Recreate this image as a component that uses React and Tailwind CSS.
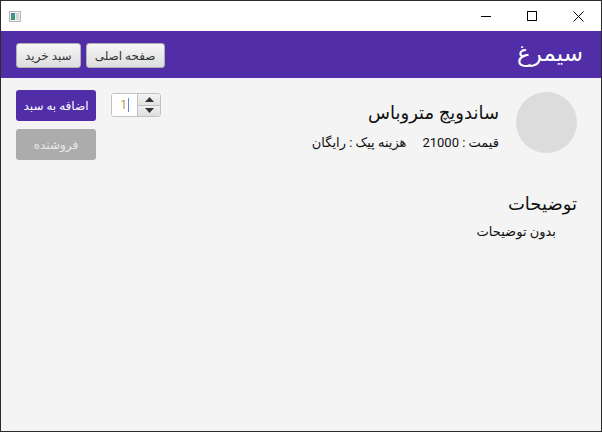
export default function App() {
  const fa = { fontFamily: "Roboto, 'DejaVu Sans', sans-serif" };

  return (
    <div
      className="w-[602px] h-[432px] border border-[#2b2b2b] flex flex-col bg-[#f4f4f4] overflow-hidden"
      style={fa}
    >
      {/* window title bar */}
      <div className="h-[30px] bg-white flex items-center justify-between shrink-0">
        <div className="ml-[8px] w-[12px] h-[11px] border border-[#b8b8b8] bg-[#e8eef0] flex p-[1px] gap-[1px]">
          <div className="w-[5px] h-full bg-gradient-to-b from-[#4a8ab0] to-[#3a9a6a]" />
          <div className="w-[3px] h-full bg-[#cfd8dc]" />
        </div>
        <div className="flex items-center h-full">
          <div className="w-[46px] h-full flex items-center justify-center">
            <div className="w-[10px] h-px bg-black" />
          </div>
          <div className="w-[46px] h-full flex items-center justify-center">
            <div className="w-[10px] h-[10px] border border-black" />
          </div>
          <div className="w-[46px] h-full flex items-center justify-center">
            <svg width="11" height="11" viewBox="0 0 11 11">
              <path d="M0.5 0.5L10.5 10.5M10.5 0.5L0.5 10.5" stroke="#000" strokeWidth="1" />
            </svg>
          </div>
        </div>
      </div>

      {/* app header */}
      <div className="h-[47px] bg-[#512da8] flex items-center justify-between pl-[15px] pr-[18px] shrink-0">
        <div className="flex gap-[5px] pt-[2px]">
          {["سبد خرید", "صفحه اصلی"].map((t) => (
            <button
              key={t}
              dir="rtl"
              className="h-[25px] px-[8px] rounded-[3px] border border-[#b0b0b0] bg-gradient-to-b from-[#f6f6f6] to-[#dedede] text-[12px] text-[#333]"
            >
              {t}
            </button>
          ))}
        </div>
        <div dir="rtl" className="text-white text-[23px] leading-none pb-[2px]">
          سیمرغ
        </div>
      </div>

      {/* content */}
      <div className="flex-1 flex flex-col">
        <div className="flex justify-between pl-[15px] pr-[24px] pt-[12px]">
          <div className="flex gap-[15px]">
            <div className="flex flex-col gap-[8px]">
              <button
                dir="rtl"
                className="w-[80px] h-[31px] rounded-[3px] bg-[#512da8] text-white text-[12px]"
              >
                اضافه به سبد
              </button>
              <button
                dir="rtl"
                className="w-[80px] h-[31px] rounded-[3px] bg-[#acacac] text-[#e8e8e8] text-[12px]"
              >
                فروشنده
              </button>
            </div>
            <div className="mt-[3px] flex h-[24px] w-[50px] rounded-[3px] border border-[#c2c2c2] overflow-hidden">
              <div className="w-[25px] bg-white flex items-center pl-[8px] text-[13px] font-light text-[#a0600a]">
                1
                <span className="w-px h-[14px] bg-[#5a8fd8] ml-[1px]" />
              </div>
              <div className="flex-1 flex flex-col border-l border-[#c2c2c2]">
                <div className="flex-1 flex items-center justify-center bg-gradient-to-b from-[#f4f4f4] to-[#e2e2e2] border-b border-[#c2c2c2]">
                  <svg width="9" height="5" viewBox="0 0 9 5">
                    <path d="M4.5 0L9 5H0Z" fill="#333" />
                  </svg>
                </div>
                <div className="flex-1 flex items-center justify-center bg-gradient-to-b from-[#f0f0f0] to-[#dedede]">
                  <svg width="9" height="5" viewBox="0 0 9 5">
                    <path d="M0 0H9L4.5 5Z" fill="#333" />
                  </svg>
                </div>
              </div>
            </div>
          </div>

          <div className="flex gap-[17px]">
            <div dir="rtl" className="flex flex-col items-start pt-[11px]">
              <div className="text-[18px] text-[#111] leading-[24px]">ساندویچ متروباس</div>
              <div className="flex gap-[16px] text-[13px] text-[#111] mt-[8px]">
                <span>قیمت : 21000</span>
                <span>هزینه پیک : رایگان</span>
              </div>
            </div>
            <div className="w-[61px] h-[61px] rounded-full bg-[#dcdcdc] mt-[2px]" />
          </div>
        </div>

        <div dir="rtl" className="pr-[24px] mt-[32px] flex flex-col items-start">
          <div className="text-[18px] text-[#111] leading-[24px]">توضیحات</div>
          <div className="text-[13px] text-[#111] mr-[21px] mt-[6px]">بدون توضیحات</div>
        </div>
      </div>
    </div>
  );
}
